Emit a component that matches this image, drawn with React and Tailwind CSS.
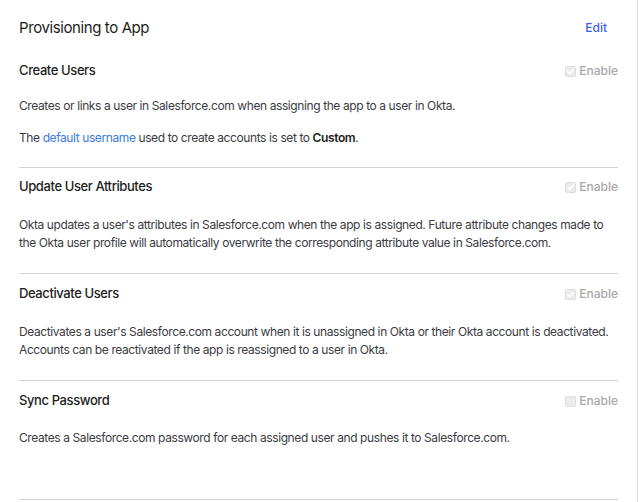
import React from "react";

function EnableBox({ checked }) {
  return (
    <div className="flex items-center gap-[3px] text-[12px] font-medium tracking-normal text-[#a9a9a9]">
      <span className="flex h-[11px] w-[11px] items-center justify-center rounded-[2px] border border-[#dedede] bg-[#ececec]">
        {checked && (
          <svg viewBox="0 0 10 10" className="h-[9px] w-[9px]">
            <path d="M2 5.2 L4.1 7.2 L8 2.8" fill="none" stroke="#ffffff" strokeWidth="1.6" strokeLinecap="round" strokeLinejoin="round" />
          </svg>
        )}
      </span>
      <span>Enable</span>
    </div>
  );
}

function Section({ title, checked, children, top, paraTop, bottom, gap }) {
  return (
    <div className={`${top} ${bottom} border-b border-[#d4d4d4]`}>
      <div className="flex h-[18px] items-center justify-between">
        <h3 className="text-[13px] font-medium text-[#1d1d21]">{title}</h3>
        <EnableBox checked={checked} />
      </div>
      <div className={`${paraTop} ${gap} flex flex-col text-[12px] leading-[18px] text-[#3b3b3f]`}>
        {children}
      </div>
    </div>
  );
}

export default function App() {
  return (
    <div
      className="min-h-[502px] w-[638px] border-r border-[#d9d9d9] bg-white pl-[19px] pr-[19px] tracking-[-0.025em]"
      style={{ fontFamily: "Inter, 'Noto Sans', sans-serif" }}
    >
      <div className="flex h-[52px] items-center justify-between pt-[4px]">
        <h2 className="text-[15px] font-normal text-[#1d1d21]">Provisioning to App</h2>
        <a className="mr-[11px] text-[12px] font-medium tracking-normal text-[#3f5fe3]">Edit</a>
      </div>
      <Section title="Create Users" checked top="pt-[10px]" paraTop="mt-[17px]" gap="gap-[14px]" bottom="pb-[20px]">
        <p>Creates or links a user in Salesforce.com when assigning the app to a user in Okta.</p>
        <p>
          The <a className="text-[#3a7be0]">default username</a> used to create accounts is set to{" "}
          <span className="font-semibold text-[#1d1d21]">Custom</span>.
        </p>
      </Section>
      <Section title="Update User Attributes" checked top="pt-[10px]" paraTop="mt-[20px]" gap="gap-[15px]" bottom="pb-[21px]">
        <p>
          Okta updates a user's attributes in Salesforce.com when the app is assigned. Future attribute changes made to
          the Okta user profile will automatically overwrite the corresponding attribute value in Salesforce.com.
        </p>
      </Section>
      <Section title="Deactivate Users" checked top="pt-[11px]" paraTop="mt-[20px]" gap="gap-[15px]" bottom="pb-[21px]">
        <p>
          Deactivates a user's Salesforce.com account when it is unassigned in Okta or their Okta account is deactivated.
          Accounts can be reactivated if the app is reassigned to a user in Okta.
        </p>
      </Section>
      <Section title="Sync Password" checked={false} top="pt-[11px]" paraTop="mt-[19px]" gap="gap-[15px]" bottom="pb-[52px]">
        <p>Creates a Salesforce.com password for each assigned user and pushes it to Salesforce.com.</p>
      </Section>
    </div>
  );
}
